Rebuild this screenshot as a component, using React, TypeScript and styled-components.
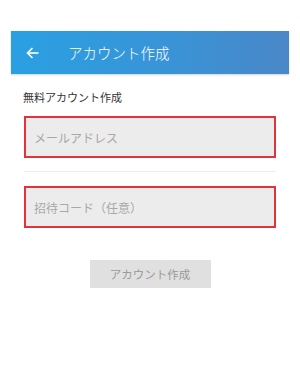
import styled, { createGlobalStyle } from "styled-components"

const Global = createGlobalStyle`
    html, body {
        margin: 0;
        padding: 0;
        background: #ffffff;
        font-family: "Noto Sans CJK JP", "Noto Sans", sans-serif;
    }
`

const Page = styled.div`
    width: 300px;
    height: 370px;
    padding-top: 31px;
    box-sizing: border-box;
    background: #ffffff;
`

const Header = styled.div`
    margin: 0 11px;
    height: 43px;
    display: flex;
    align-items: center;
    background: linear-gradient(90deg, #29a0e2 0%, #3a93d6 60%, #4a87c8 100%);
    box-shadow: 0 1px 2px rgba(0, 0, 0, 0.18);
    color: #ffffff;
`

const BackButton = styled.div`
    width: 57px;
    padding-left: 15px;
    box-sizing: border-box;
    display: flex;
    align-items: center;
`

const Title = styled.div`
    font-size: 14.5px;
    font-weight: 300;
`

const Content = styled.div`
    padding: 0 24px 0 23px;
`

const Subtitle = styled.div`
    margin-top: 15px;
    font-size: 11px;
    color: #333333;
    line-height: 16px;
`

const Field = styled.div`
    height: 42px;
    box-sizing: border-box;
    border: 2px solid #e0333a;
    background: #ececec;
    display: flex;
    align-items: center;
    padding-left: 8px;
    font-size: 12px;
    color: #a8a8a8;
    margin-left: 1px;
`

const FirstField = styled(Field)`
    margin-top: 11px;
`

const Divider = styled.div`
    margin: 13px 0 14px 1px;
    height: 1px;
    background: #ececec;
`

const ButtonRow = styled.div`
    display: flex;
    justify-content: center;
    margin-top: 32px;
`

const SubmitButton = styled.div`
    width: 121px;
    height: 28px;
    background: #e0e0e0;
    color: #9a9a9a;
    font-size: 11.5px;
    display: flex;
    align-items: center;
    justify-content: center;
    margin-left: 1px;
`

export default function App() {
    return <Page>
        <Global />
        <Header>
            <BackButton>
                <svg width="13" height="12" viewBox="0 0 13 12" fill="none" stroke="#ffffff" strokeWidth="1.6">
                    <path d="M12.5 6H1.5" />
                    <path d="M6.5 1L1.5 6L6.5 11" />
                </svg>
            </BackButton>
            <Title>アカウント作成</Title>
        </Header>
        <Content>
            <Subtitle>無料アカウント作成</Subtitle>
            <FirstField>メールアドレス</FirstField>
            <Divider />
            <Field>招待コード（任意）</Field>
            <ButtonRow>
                <SubmitButton>アカウント作成</SubmitButton>
            </ButtonRow>
        </Content>
    </Page>
}
